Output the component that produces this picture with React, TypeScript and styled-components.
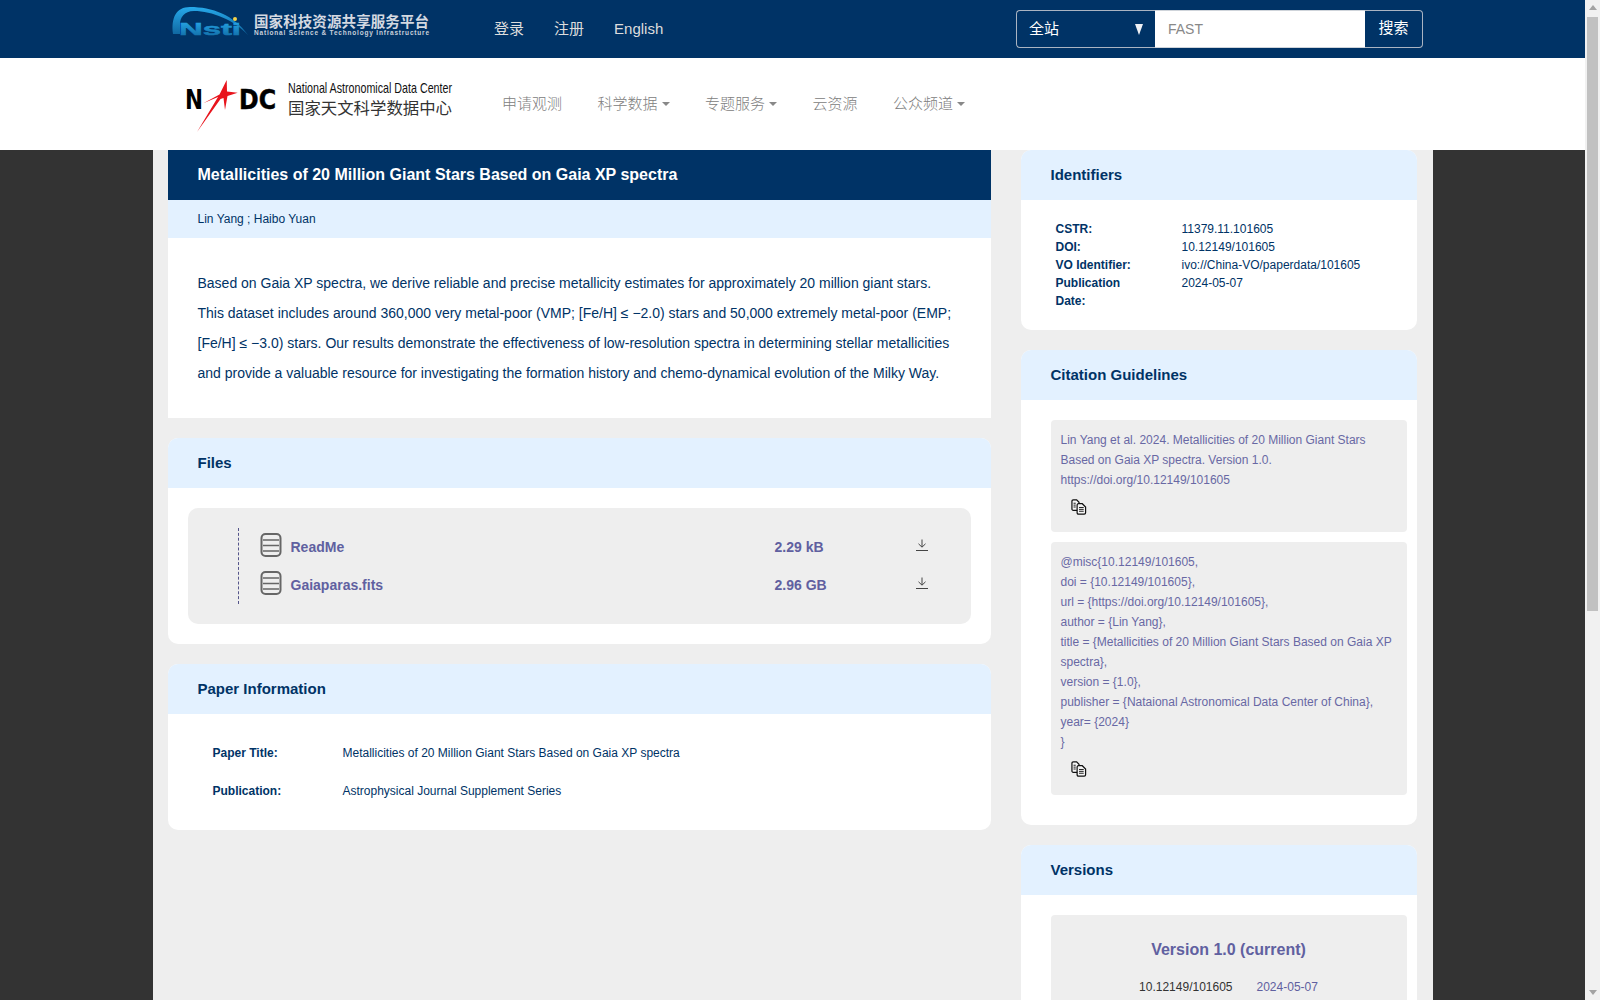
import { createGlobalStyle, styled } from 'styled-components';

const SANS = `"Liberation Sans", "Noto Sans CJK SC", sans-serif`;
const NAVY = '#003366';
const PURPLE = '#6060a0';

const GlobalStyle = createGlobalStyle`
  body {
    margin: 0;
    background: #333333;
    font-family: ${SANS};
    font-size: 14px;
    line-height: 20px;
    color: ${NAVY};
  }
  * { box-sizing: border-box; }
`;

const Shell = styled.div`
  display: flex;
  height: 100vh;
  overflow: hidden;
`;

const Viewport = styled.div`
  flex: 1;
  min-width: 0;
`;

const Scrollbar = styled.aside`
  width: 15px;
  background: #f1f1f1;
  display: flex;
  flex-direction: column;
  align-items: center;
`;

const ScrollArrow = styled.span<{ $down?: boolean }>`
  width: 0;
  height: 0;
  margin: ${(p) => (p.$down ? 'auto 0 5px' : '5px 0 7px')};
  border-left: 4px solid transparent;
  border-right: 4px solid transparent;
  border-bottom: ${(p) => (p.$down ? '0' : '5px solid #a3a3a3')};
  border-top: ${(p) => (p.$down ? '5px solid #a3a3a3' : '0')};
`;

const ScrollThumb = styled.div`
  width: 11px;
  height: 594px;
  background: #c1c1c1;
`;

const TopBar = styled.header`
  height: 58px;
  background: ${NAVY};
  display: flex;
  align-items: center;
  padding: 0 162px 0 170px;
`;

const TopLinks = styled.nav`
  display: flex;
  gap: 30px;
  margin-left: 60px;
  flex: 1;
`;

const TopLink = styled.a`
  font-size: 15px;
  color: #dddddd;
  line-height: 20px;
`;

const SearchForm = styled.form`
  display: flex;
  height: 38px;
`;

const SiteSelect = styled.div`
  width: 139px;
  border: 1px solid #aab4c2;
  border-right: none;
  border-radius: 4px 0 0 4px;
  padding: 0 12px;
  color: #fff;
  font-size: 15px;
  display: flex;
  align-items: center;
  justify-content: space-between;
`;

const SelectArrow = styled.span`
  width: 0;
  height: 0;
  border-left: 4.5px solid transparent;
  border-right: 4.5px solid transparent;
  border-top: 11px solid #eef0f4;
`;

const SearchInput = styled.input`
  width: 210px;
  border: 1px solid #cfd4da;
  border-width: 1px 0;
  padding: 0 13px;
  font: 14px ${SANS};
  color: #888;
  outline: none;
  background: #fff;
`;

const SearchButton = styled.button`
  width: 58px;
  border: 1px solid #aab4c2;
  border-left: none;
  border-radius: 0 4px 4px 0;
  background: ${NAVY};
  color: #fff;
  font: 15px/20px ${SANS};
  padding: 0 0 3px;
`;

const NavBar = styled.div`
  height: 92px;
  background: #fff;
  display: flex;
  align-items: center;
  padding-left: 180px;
`;

const NavLinks = styled.nav`
  display: flex;
  margin-left: 22px;
  gap: 35.5px;
`;

const NavLink = styled.a`
  font-size: 15px;
  font-weight: 300;
  color: #808080;
  display: flex;
  align-items: center;
  gap: 4px;
`;

const Caret = styled.span`
  width: 0;
  height: 0;
  border-left: 4px solid transparent;
  border-right: 4px solid transparent;
  border-top: 4px solid #888888;
`;

const Page = styled.main`
  width: 1280px;
  margin: 0 auto;
  background: #eeeeee;
  padding: 0 15px 30px;
  display: flex;
  gap: 30px;
`;

const LeftColumn = styled.div`
  width: 823px;
  display: flex;
  flex-direction: column;
  gap: 20px;
`;

const RightColumn = styled.div`
  width: 396px;
  display: flex;
  flex-direction: column;
  gap: 20px;
`;

const Card = styled.section<{ $square?: boolean }>`
  background: #fff;
  border-radius: ${(p) => (p.$square ? '0' : '10px')};
  overflow: hidden;
`;

const CardHead = styled.h2`
  margin: 0;
  height: 50px;
  padding-left: 30px;
  background: #e3f1ff;
  color: ${NAVY};
  font-size: 15px;
  font-weight: 700;
  line-height: 50px;
`;

const TitleBar = styled.h1`
  margin: 0;
  height: 50px;
  padding-left: 30px;
  background: ${NAVY};
  color: #fff;
  font-size: 16px;
  font-weight: 700;
  line-height: 50px;
`;

const Authors = styled.div`
  height: 38px;
  padding-left: 30px;
  background: #e3f1ff;
  font-size: 12px;
  line-height: 38px;
`;

const Abstract = styled.p`
  margin: 0;
  padding: 30px;
  font-size: 14px;
  line-height: 30px;
`;

const FilesBody = styled.div`
  padding: 20px;
`;

const FileBox = styled.div`
  background: #eeeeee;
  border-radius: 10px;
  padding: 20px 50px;
`;

const FileTree = styled.ul`
  list-style: none;
  margin: 0;
  padding: 0 0 0 21px;
  border-left: 1px dashed #55558a;
`;

const FileRow = styled.li`
  height: 38px;
  display: grid;
  grid-template-columns: 31px 484px 141px 30px;
  align-items: center;
  color: ${PURPLE};
  font-weight: 700;
  font-size: 14px;
`;

const FileGlyph = styled.span`
  display: block;
  height: 24px;
  margin-top: -4px;
`;

const DownloadLink = styled.a`
  display: block;
  height: 12px;
  margin-top: -10px;
`;

const InfoBody = styled.div`
  padding: 20px 45px;
`;

const InfoRow = styled.div`
  display: grid;
  grid-template-columns: 130px 1fr;
  height: 38px;
  align-items: center;
  font-size: 12px;
`;

const InfoLabel = styled.span`
  font-weight: 700;
`;

const IdTable = styled.dl`
  margin: 0;
  padding: 20px 35px;
  display: grid;
  grid-template-columns: 126px 1fr;
  font-size: 12px;
  line-height: 18px;
`;

const IdLabel = styled.dt`
  font-weight: 700;
  width: 90px;
`;

const IdValue = styled.dd`
  margin: 0;
`;

const CitationBody = styled.div`
  padding: 20px 10px 30px 30px;
  display: flex;
  flex-direction: column;
  gap: 10px;
`;

const CiteBox = styled.div`
  background: #eeeeee;
  border-radius: 4px;
  padding: 10px;
  font-size: 12px;
  line-height: 20px;
  color: #6868a4;
  &:last-child {
    padding-bottom: 11px;
  }
`;

const CiteLine = styled.div``;

const CopyButton = styled.button`
  display: block;
  border: none;
  background: none;
  padding: 0;
  margin: 9px 0 7px 10px;
  height: 16px;
`;

const VersionBody = styled.div`
  padding: 20px 10px 30px 30px;
`;

const VersionBox = styled.div`
  background: #eeeeee;
  border-radius: 4px;
  padding: 25px 10px 20px;
  text-align: center;
`;

const VersionTitle = styled.h3`
  margin: 0 0 17px;
  font-size: 16px;
  line-height: 20px;
  font-weight: 700;
  color: ${PURPLE};
`;

const VersionMeta = styled.div`
  display: flex;
  justify-content: center;
  gap: 24px;
  font-size: 12px;
  line-height: 20px;
  color: #333;
`;

const VersionDate = styled.span`
  color: ${PURPLE};
`;

function NstiLogo() {
  return (
    <svg width="264" height="58" viewBox="0 0 264 58">
      <defs>
        <linearGradient id="nsti" x1="0" y1="0" x2="0" y2="1">
          <stop offset="0" stopColor="#27a9ea" />
          <stop offset="1" stopColor="#0f669f" />
        </linearGradient>
      </defs>
      <path d="M3 34C1 18 6 7 20 7C42 7 64 15 78 35C64 20 42 11 24 11C14 11 10 18 10 24L10 34Z" fill="url(#nsti)" />
      <text x="9" y="35" fontFamily="Liberation Sans" fontWeight="700" fontSize="17" fill="url(#nsti)" stroke="url(#nsti)" strokeWidth="0.5" textLength="62" lengthAdjust="spacingAndGlyphs">Nsti</text>
      <circle cx="65" cy="19" r="2" fill="#f4d24a" />
      <text x="84" y="27" fontFamily="Noto Sans CJK SC" fontWeight="700" fontSize="14.5" fill="#d4d9e1" textLength="175">国家科技资源共享服务平台</text>
      <text x="84" y="35" fontFamily="Liberation Sans" fontWeight="700" fontSize="6.5" fill="#c8d0db" textLength="175">National Science &amp; Technology Infrastructure</text>
    </svg>
  );
}

function NadcLogo() {
  return (
    <svg width="300" height="60" viewBox="0 -1 300 60" overflow="visible">
      <text x="5" y="34" fontFamily="DejaVu Sans" fontWeight="700" fontSize="26" fill="#000" textLength="18" lengthAdjust="spacingAndGlyphs">N</text>
      <path d="M17 57L38 22L23.3 28.3L39.5 19.5L46.7 5L47 16.5L57.7 17.7L47.5 21L45 35L43.5 23L40.5 24Z" fill="#e8141c" />
      <text x="59" y="34" fontFamily="DejaVu Sans" fontWeight="700" fontSize="26" fill="#000" stroke="#000" strokeWidth="0.5" textLength="37" lengthAdjust="spacingAndGlyphs">DC</text>
      <text x="108" y="18" fontFamily="Liberation Sans Narrow, Liberation Sans" fontSize="15" fill="#111" textLength="164" lengthAdjust="spacingAndGlyphs">National Astronomical Data Center</text>
      <text x="108" y="39" fontFamily="Noto Sans CJK SC" fontSize="16.4" fill="#333" textLength="164">国家天文科学数据中心</text>
    </svg>
  );
}

function FileIcon() {
  return (
    <svg width="22" height="24" viewBox="0 0 22 24" fill="none" stroke="#666" strokeWidth="2">
      <rect x="1.5" y="1" width="19" height="22" rx="4" />
      <path d="M3 7H19M3 12.5H19M3 18H19" strokeWidth="1.7" />
    </svg>
  );
}

function DownloadIcon() {
  return (
    <svg width="12" height="12" viewBox="0 0 12 12" fill="none" stroke="#444" strokeWidth="1">
      <path d="M6 0.5V8M2.5 4.8L6 8.2L9.5 4.8M0 11.5H12" />
    </svg>
  );
}

function CopyIcon() {
  return (
    <svg width="16" height="16" viewBox="0 0 17 17" fill="#f6f6f6" stroke="#111" strokeWidth="1.3">
      <path d="M1 2.5Q1 1 2.5 1H6L8.5 3.5V12H2.5Q1 12 1 10.5Z" />
      <path d="M6.5 6.5Q6.5 5 8 5H12L15.5 8.5V14.5Q15.5 16 14 16H8Q6.5 16 6.5 14.5Z" />
      <path d="M8.5 9H13.5M8.5 11H13.5M8.5 13H13.5M2.7 4.5H5M2.7 6.5H5M2.7 8.5H5" strokeWidth="1" />
    </svg>
  );
}

const FILES = [
  { name: 'ReadMe', size: '2.29 kB' },
  { name: 'Gaiaparas.fits', size: '2.96 GB' },
];

const IDENTIFIERS = [
  ['CSTR:', '11379.11.101605'],
  ['DOI:', '10.12149/101605'],
  ['VO Identifier:', 'ivo://China-VO/paperdata/101605'],
  ['Publication Date:', '2024-05-07'],
];

const BIBTEX = [
  '@misc{10.12149/101605,',
  'doi = {10.12149/101605},',
  'url = {https://doi.org/10.12149/101605},',
  'author = {Lin Yang},',
  'title = {Metallicities of 20 Million Giant Stars Based on Gaia XP spectra},',
  'version = {1.0},',
  'publisher = {Nataional Astronomical Data Center of China},',
  'year= {2024}',
  '}',
];

function App() {
  return (
    <Shell>
      <GlobalStyle />
      <Viewport>
        <TopBar>
          <NstiLogo />
          <TopLinks>
            <TopLink>登录</TopLink>
            <TopLink>注册</TopLink>
            <TopLink>English</TopLink>
          </TopLinks>
          <SearchForm>
            <SiteSelect>
              全站
              <SelectArrow />
            </SiteSelect>
            <SearchInput defaultValue="FAST" />
            <SearchButton type="button">搜索</SearchButton>
          </SearchForm>
        </TopBar>
        <NavBar>
          <NadcLogo />
          <NavLinks>
            <NavLink>申请观测</NavLink>
            <NavLink>科学数据<Caret /></NavLink>
            <NavLink>专题服务<Caret /></NavLink>
            <NavLink>云资源</NavLink>
            <NavLink>公众频道<Caret /></NavLink>
          </NavLinks>
        </NavBar>
        <Page>
          <LeftColumn>
            <Card $square>
              <TitleBar>Metallicities of 20 Million Giant Stars Based on Gaia XP spectra</TitleBar>
              <Authors>Lin Yang ; Haibo Yuan</Authors>
              <Abstract>
                Based on Gaia XP spectra, we derive reliable and precise metallicity estimates for approximately 20 million giant stars. This dataset includes around 360,000 very metal-poor (VMP; [Fe/H] ≤ −2.0) stars and 50,000 extremely metal-poor (EMP; [Fe/H] ≤ −3.0) stars. Our results demonstrate the effectiveness of low-resolution spectra in determining stellar metallicities and provide a valuable resource for investigating the formation history and chemo-dynamical evolution of the Milky Way.
              </Abstract>
            </Card>
            <Card>
              <CardHead>Files</CardHead>
              <FilesBody>
                <FileBox>
                  <FileTree>
                    {FILES.map((file) => (
                      <FileRow key={file.name}>
                        <FileGlyph><FileIcon /></FileGlyph>
                        <span>{file.name}</span>
                        <span>{file.size}</span>
                        <DownloadLink><DownloadIcon /></DownloadLink>
                      </FileRow>
                    ))}
                  </FileTree>
                </FileBox>
              </FilesBody>
            </Card>
            <Card>
              <CardHead>Paper Information</CardHead>
              <InfoBody>
                <InfoRow>
                  <InfoLabel>Paper Title:</InfoLabel>
                  <span>Metallicities of 20 Million Giant Stars Based on Gaia XP spectra</span>
                </InfoRow>
                <InfoRow>
                  <InfoLabel>Publication:</InfoLabel>
                  <span>Astrophysical Journal Supplement Series</span>
                </InfoRow>
              </InfoBody>
            </Card>
          </LeftColumn>
          <RightColumn>
            <Card>
              <CardHead>Identifiers</CardHead>
              <IdTable>
                {IDENTIFIERS.map(([label, value]) => (
                  <>
                    <IdLabel key={label}>{label}</IdLabel>
                    <IdValue key={value}>{value}</IdValue>
                  </>
                ))}
              </IdTable>
            </Card>
            <Card>
              <CardHead>Citation Guidelines</CardHead>
              <CitationBody>
                <CiteBox>
                  Lin Yang et al. 2024. Metallicities of 20 Million Giant Stars Based on Gaia XP spectra. Version 1.0. https://doi.org/10.12149/101605
                  <CopyButton type="button"><CopyIcon /></CopyButton>
                </CiteBox>
                <CiteBox>
                  {BIBTEX.map((line) => (
                    <CiteLine key={line}>{line}</CiteLine>
                  ))}
                  <CopyButton type="button"><CopyIcon /></CopyButton>
                </CiteBox>
              </CitationBody>
            </Card>
            <Card>
              <CardHead>Versions</CardHead>
              <VersionBody>
                <VersionBox>
                  <VersionTitle>Version 1.0 (current)</VersionTitle>
                  <VersionMeta>
                    <span>10.12149/101605</span>
                    <VersionDate>2024-05-07</VersionDate>
                  </VersionMeta>
                </VersionBox>
              </VersionBody>
            </Card>
          </RightColumn>
        </Page>
      </Viewport>
      <Scrollbar>
        <ScrollArrow />
        <ScrollThumb />
        <ScrollArrow $down />
      </Scrollbar>
    </Shell>
  );
}

export default App;
